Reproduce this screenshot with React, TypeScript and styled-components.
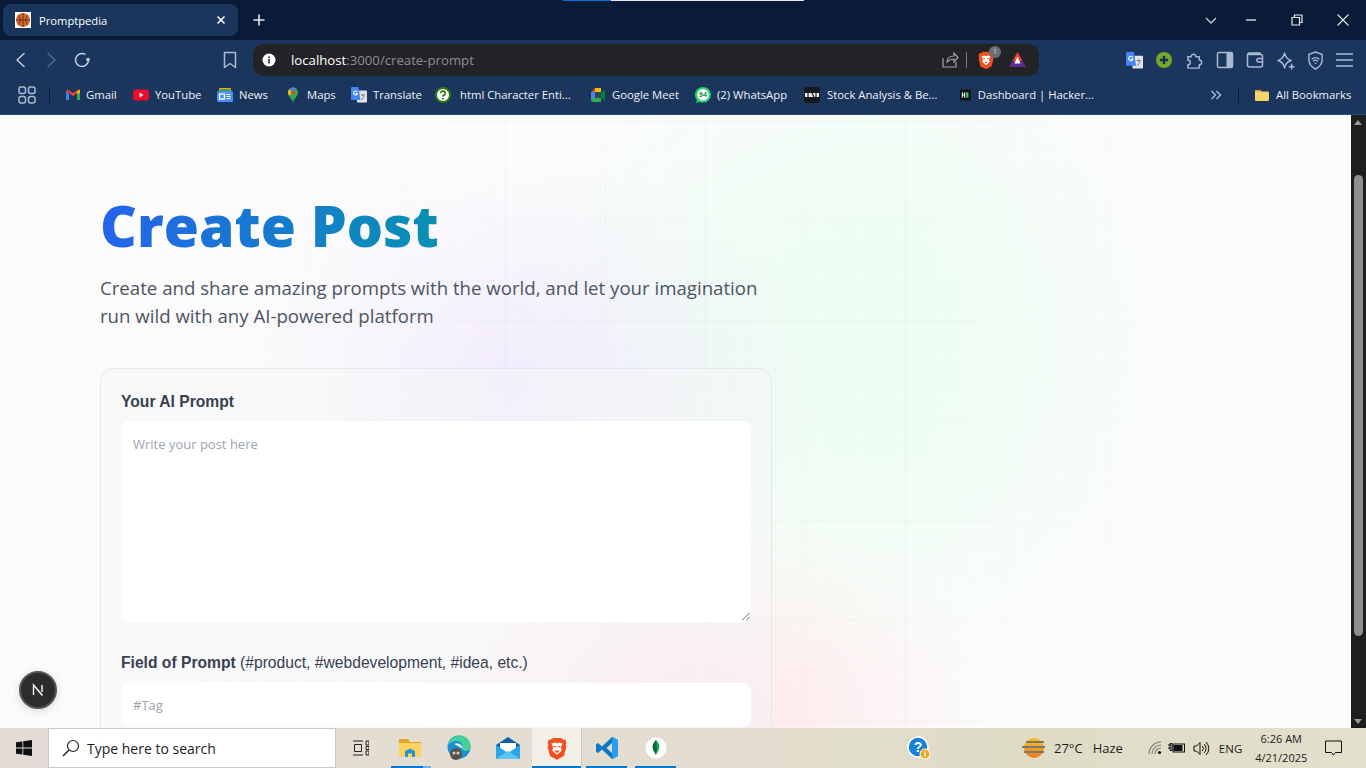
import React from "react";
import styled, { createGlobalStyle } from "styled-components";

const Global = createGlobalStyle`
  html, body { margin: 0; padding: 0; height: 100%; overflow: hidden; background: #fff; }
  #root { height: 100vh; }
  * { box-sizing: border-box; }
`;

const Shell = styled.div`
  position: relative; height: 768px; width: 1366px; display: flex; flex-direction: column; overflow: hidden;
  font-family: "Open Sans", "Noto Sans", sans-serif;
`;
const Progress = styled.div`
  position: absolute; top: 0; left: 563px; width: 241px; height: 1px; z-index: 5;
  background: linear-gradient(90deg, #0a6fd8 0 48px, #e8e8e8 48px);
`;
const TabStrip = styled.div`
  height: 40px; flex: none; background: #0a1b38; display: flex; align-items: center; padding: 0 0 0 3px; color: #fff;
`;
const Tab = styled.div`
  width: 235px; height: 32px; background: #1b365d; border-radius: 8px; display: flex; align-items: center; padding: 0 12px;
`;
const TabTitle = styled.span`
  font-size: 11.2px; color: #fff; margin-left: 8px; flex: 1;
`;
const StripSpacer = styled.div`flex: 1;`;
const WinBtn = styled.div<{ $pad?: number }>`
  width: 46px; height: 40px; display: flex; align-items: center; justify-content: center; padding-left: ${p => p.$pad ?? 0}px;
`;
const NewTab = styled.div`
  margin-left: 11px; width: 20px; height: 20px; display: flex; align-items: center; justify-content: center;
`;
const Toolbar = styled.div`
  height: 40px; flex: none; background: #1b365d; display: flex; align-items: center; padding-left: 14px;
`;
const NavBtn = styled.div<{ $w: number }>`
  width: ${p => p.$w}px; height: 24px; display: flex; align-items: center; flex: none;
`;
const Address = styled.div`
  width: 786px; height: 32px; background: #222326; border-radius: 10px; display: flex; align-items: center; padding: 0 12px 0 9px; margin-left: 14px; flex: none;
`;
const Host = styled.span`font-size: 13.2px; color: #fff; margin-left: 15px;`;
const Path = styled.span`font-size: 13.2px; color: #8d8e92;`;
const AddrEnd = styled.div`margin-left: auto; display: flex; align-items: center;`;
const AddrSep = styled.div`width: 1px; height: 16px; background: #7d7e82; margin: 0 11px 0 7px;`;
const ShieldWrap = styled.div`position: relative; display: flex;`;
const ShieldBadge = styled.span`
  position: absolute; top: -5px; right: -7px; width: 12px; height: 12px; border-radius: 50%; background: #6d6f78; color: #ddd;
  font-size: 7px; line-height: 12px; text-align: center;
`;
const ExtRow = styled.div`
  display: flex; align-items: center; margin-left: 87px; gap: 12px;
`;
const Bookmarks = styled.div`
  height: 35px; flex: none; background: #1b365d; display: flex; align-items: center; padding: 0 0 5px 18px; border-bottom: 1px solid #2f4a70;
`;
const VSep = styled.div<{ $l: number; $r: number }>`
  width: 1px; height: 16px; background: #0a1b38; margin-left: ${p => p.$l}px; margin-right: ${p => p.$r}px; flex: none;
`;
const Mark = styled.div<{ $w: number; $gap?: number }>`
  width: ${p => p.$w}px; flex: none; display: flex; align-items: center; gap: ${p => p.$gap ?? 6}px; white-space: nowrap; overflow: hidden;
  font-size: 11.3px; color: #eef1f5;
`;
const Content = styled.div`
  flex: 1; min-height: 0; display: flex; position: relative;
`;
const Page = styled.main`
  flex: 1; min-width: 0; overflow: hidden; padding: 80px 0 0 100px;
  background-color: #fcfcfc;
  background-image:
    linear-gradient(90deg, #fbfbfb 8%, transparent 38%, transparent 68%, #fbfbfb 96%),
    linear-gradient(rgba(0,0,0,.016) 1px, transparent 1px),
    linear-gradient(90deg, rgba(0,0,0,.016) 1px, transparent 1px),
    linear-gradient(rgba(0,0,0,.009) 1px, transparent 1px),
    linear-gradient(90deg, rgba(0,0,0,.009) 1px, transparent 1px),
    radial-gradient(ellipse 330px 230px at 500px 270px, rgba(236,226,255,.62), transparent 100%),
    radial-gradient(ellipse 400px 340px at 880px 225px, rgba(236,254,242,1) 0, rgba(236,254,242,.8) 35%, transparent 100%),
    radial-gradient(ellipse 300px 240px at 700px 610px, rgba(255,230,232,.95), transparent 100%);
  background-size: auto, 100px 100px, 100px 100px, 10px 10px, 10px 10px, auto, auto, auto;
  background-position: 0 0, 5px 5px, 5px 5px, 5px 5px, 5px 5px, 0 0, 0 0, 0 0;
`;
const Title = styled.h1`
  margin: 0; font-family: "Open Sans", sans-serif; font-weight: 800; font-size: 57px; line-height: 60px;
  width: max-content; background: linear-gradient(90deg, #2563eb, #0891b2); -webkit-background-clip: text; background-clip: text; color: transparent;
`;
const Lead = styled.p`
  margin: 19px 0 0; width: 672px; font-size: 18.65px; line-height: 28px; color: #4b5563; font-family: "Open Sans", sans-serif;
`;
const Card = styled.form`
  margin-top: 38px; width: 672px; padding: 20px; border: 1px solid #e5e7eb; border-radius: 14px;
  background: rgba(247,247,247,.45); display: flex; flex-direction: column;
`;
const Label = styled.label`
  display: block; height: 24px; padding-top: 1px;
  font-family: "Liberation Sans", Arial, sans-serif; font-size: 15.65px; line-height: 24px; font-weight: 700; color: #374151;
`;
const LabelNote = styled.span`font-weight: 400;`;
const TextBox = styled.div`
  margin-top: 8px; height: 201px; background: #fff; border-radius: 8px; padding: 13px 12px; position: relative;
  font-size: 13px; color: #9ca3af; line-height: 20px; font-family: "Open Sans", sans-serif; margin-bottom: 28px;
`;
const Grip = styled.svg`position: absolute; right: 1px; bottom: 1px;`;
const InputBox = styled.div`
  margin-top: 9px; height: 44px; background: #fff; border-radius: 8px; padding: 12px; font-size: 13px; line-height: 20px; color: #9ca3af; font-family: "Open Sans", sans-serif;
`;
const ScrollTrack = styled.div`
  width: 15px; flex: none; background: #1e1e1e; position: relative;
`;
const Thumb = styled.div`
  position: absolute; top: 60px; left: 3px; width: 9px; height: 461px; background: #8f8f8f; border-radius: 5px;
`;
const ArrowUp = styled.div`
  position: absolute; top: 5px; left: 3px; width: 0; height: 0; border: 4.5px solid transparent; border-bottom: 5px solid #9a9a9a; border-top: 0;
`;
const ArrowDown = styled.div`
  position: absolute; bottom: 4px; left: 3px; width: 0; height: 0; border: 4.5px solid transparent; border-top: 5px solid #9a9a9a; border-bottom: 0;
`;
const NextBadge = styled.div`
  position: absolute; left: 19px; top: 556px; width: 38px; height: 38px; border-radius: 50%; background: #2c2c2c; border: 2px solid #555;
  display: flex; align-items: center; justify-content: center; box-shadow: 0 2px 8px rgba(0,0,0,.15);
`;
const Taskbar = styled.footer`
  height: 40px; flex: none; display: flex; align-items: center;
  background: linear-gradient(90deg, #e4dcd4 0%, #e3ddd0 50%, #dfdcc6 75%, #e2dfcc 100%);
`;
const StartBtn = styled.div`width: 48px; height: 40px; display: flex; align-items: center; justify-content: center; flex: none;`;
const SearchBox = styled.div`
  width: 288px; height: 40px; background: #fff; border: 1px solid #c8c8c8; display: flex; align-items: center; padding-left: 13px; flex: none;
  font-size: 14px; color: #1c1c1c; gap: 7px;
`;
const TaskIcon = styled.div<{ $active?: boolean; $inset?: number; $split?: boolean }>`
  width: 49px; height: 40px; flex: none; display: flex; align-items: center; justify-content: center; position: relative;
  background: ${p => (p.$active ? "#f3efe9" : "transparent")};
  &::after {
    content: ""; display: ${p => (p.$inset === undefined ? "none" : "block")}; position: absolute;
    left: ${p => p.$inset ?? 0}px; right: ${p => (p.$split ? 3 : p.$inset ?? 0)}px; bottom: 0; height: 2px;
    background: ${p => (p.$split ? "linear-gradient(90deg, #0078d4 80%, #6cb2e8 80%)" : "#0078d4")};
  }
`;
const TaskSep = styled.div`width: 1px; height: 38px; background: #c9c5bd; flex: none;`;
const Tray = styled.div`
  flex: 1; display: flex; align-items: center; font-size: 13px; color: #1c1c1c;
`;
const TrayItem = styled.div<{ $l: number }>`
  margin-left: ${p => p.$l}px; display: flex; align-items: center; flex: none; white-space: nowrap;
`;
const LangText = styled.span`font-size: 11.5px;`;
const Clock = styled.div`
  margin-left: 6px; width: 66px; text-align: center; font-size: 11px; line-height: 19px; color: #1c1c1c; flex: none;
`;

const ink = "#a9bad2";
const stroke = { fill: "none", stroke: ink, strokeWidth: 1.5, strokeLinecap: "round" as const, strokeLinejoin: "round" as const };

const Ball = () => (
  <svg width="16" height="16" viewBox="0 0 16 16"><rect width="16" height="16" fill="#fff" /><circle cx="8" cy="8" r="7" fill="#d9672a" /><path d="M1 8h14M8 1v14M3 3c3 3 3 7 0 10M13 3c-3 3-3 7 0 10" fill="none" stroke="#5a2c12" strokeWidth=".9" /></svg>
);
const Gmail = () => (
  <svg width="16" height="16" viewBox="0 0 16 16"><path d="M1 4v9h3V7z" fill="#4285f4" /><path d="M15 4v9h-3V7z" fill="#34a853" /><path d="M1 4l7 5 7-5-1.500-1.500L8 6 2.500 2.500z" fill="#ea4335" /><path d="M12 4.500l3-2v3l-3 2z" fill="#fbbc04" /></svg>
);
const YouTube = () => (
  <svg width="16" height="16" viewBox="0 0 16 16"><rect y="2.500" width="16" height="11" rx="3" fill="#f5072e" /><path d="M6.500 5.500l4 2.500-4 2.500z" fill="#fff" /></svg>
);
const News = () => (
  <svg width="16" height="16" viewBox="0 0 16 16"><rect x="2" y="1" width="12" height="6" rx="1" fill="#f9ab00" /><rect x="3" y="2" width="10" height="5" fill="#34a853" /><rect y="4" width="16" height="11" rx="1.500" fill="#4a90f2" /><rect x="2.500" y="7" width="5" height="5" fill="none" stroke="#fff" strokeWidth="1.300" /><path d="M9.500 7.500h4M9.500 9.500h4M9.500 11.500h4" stroke="#fff" strokeWidth="1.200" /></svg>
);
const Maps = () => (
  <svg width="16" height="16" viewBox="0 0 16 16"><path d="M8 0.500C5 .5 3 2.800 3 5.500c0 3.500 3.500 5.500 5 10 1.500-4.500 5-6.500 5-10C13 2.800 11 .5 8 .5z" fill="#34a853" /><path d="M4 2.500A5 5 0 0 1 8 .5a5 5 0 0 1 3 1L8 5.500z" fill="#4285f4" /><path d="M3 5.500c0 1.300.4 2.200 1 3l4-3-4-3c-.6.8-1 1.800-1 3z" fill="#fbbc04" /><circle cx="8" cy="5.500" r="2" fill="#ea4335" /></svg>
);
const Translate = ({ s = 16 }: { s?: number }) => (
  <svg width={s} height={s} viewBox="0 0 16 16"><rect x="6" y="3.500" width="10" height="12" rx=".8" fill="#dfe3e8" /><path d="M1 0h6.500l2 13H1a1 1 0 0 1-1-1V1a1 1 0 0 1 1-1z" fill="#4285f4" /><path d="M6.300 5A2 2 0 1 0 6.500 6.600H4.500" fill="none" stroke="#fff" strokeWidth="1.100" /><path d="M10 8h4M12 7v2M10.500 13l3-4" stroke="#777" strokeWidth=".9" fill="none" /></svg>
);
const Help = () => (
  <svg width="16" height="16" viewBox="0 0 16 16"><circle cx="8" cy="8" r="7" fill="#fff" stroke="#2d7a12" strokeWidth="2" /><path d="M5.800 6.200A2.200 2.200 0 1 1 8 8.500v1.300" fill="none" stroke="#2d7a12" strokeWidth="1.600" /><circle cx="8" cy="11.700" r="1" fill="#2d7a12" /></svg>
);
const Meet = () => (
  <svg width="16" height="16" viewBox="0 0 16 16"><path d="M1 5l4-4h6v4H5v6H1z" fill="#ea4335" /><path d="M5 1h6v4H5z" fill="#fbbc04" /><path d="M1 5h4v6H1z" fill="#4285f4" /><path d="M1 11h10v4H3a2 2 0 0 1-2-2z" fill="#34a853" /><path d="M11 5l4-2v10l-4-2z" fill="#00832d" /><path d="M5 5h6v6H5z" fill="#2a4a5a" /></svg>
);
const WhatsApp = () => (
  <svg width="16" height="16" viewBox="0 0 16 16"><path d="M8 0a8 7.800 0 0 1 0 15.600c-1.400 0-2.700-.3-3.800-.9L1 16l.9-3.200A8 7.800 0 0 1 8 0z" fill="#25d366" /><circle cx="8" cy="7.800" r="5.800" fill="#fff" /><text x="8" y="10.300" textAnchor="middle" fontSize="7" fontWeight="700" fill="#128c3e" fontFamily="Liberation Sans">94</text></svg>
);
const Stock = () => (
  <svg width="16" height="16" viewBox="0 0 16 16"><rect width="16" height="16" rx="3" fill="#14181f" /><path d="M1 6h14v4H1z" fill="#f2f2f2" /><path d="M4 6v4M8 6l2 4M12 6v4" stroke="#14181f" strokeWidth="1.200" /></svg>
);
const Hacker = () => (
  <svg width="16" height="16" viewBox="0 0 16 16"><rect width="16" height="16" fill="#0d1117" /><path d="M3.500 4v8M7 4v8M3.500 8H7" stroke="#fff" strokeWidth="1.500" /><rect x="9" y="4" width="3.500" height="8" fill="#2ec866" /></svg>
);
const Folder = () => (
  <svg width="16" height="16" viewBox="0 0 16 16"><path d="M1 4a1 1 0 0 1 1-1h4l1.500 1.500H14a1 1 0 0 1 1 1V13a1 1 0 0 1-1 1H2a1 1 0 0 1-1-1z" fill="#f5d36b" /><path d="M1 4a1 1 0 0 1 1-1h4l1.500 1.500H1z" fill="#d9a52e" /></svg>
);
const BraveShield = ({ s = 16 }: { s?: number }) => (
  <svg width={s} height={s * 1.150} viewBox="0 0 16 18">
    <path d="M3 1.800L5 .5h6l2 1.300 1.800.2.700 2.300-.6 1.700.6 1.500-2 7.500L8 18l-5.500-2.800-2-7.500.6-1.500-.6-1.700.7-2.300z" fill="#f1501f" />
    <path d="M3.500 5l3-.8L8 5l1.500-.8 3 .8-1.500 3 .8 2.500L8 14l-3.800-3.500L5 8z" fill="#fff" />
    <path d="M5.300 7.300l1.700.4M10.700 7.300L9 7.700M7 11h2l-1 1z" stroke="#f1501f" strokeWidth="1" fill="none" />
  </svg>
);
const WinLogo = () => (
  <svg width="16" height="16" viewBox="0 0 16 16"><path d="M0 2.300l6.500-.9v6.200H0zM7.300 1.300L16 0v7.600H7.300zM0 8.400h6.500v6.200L0 13.700zM7.300 8.400H16V16l-8.700-1.200z" fill="#111" /></svg>
);
const NextN = () => (
  <svg width="14" height="14" viewBox="0 0 14 14"><path d="M2.500 12V2l9 10.500M11 2v7" fill="none" stroke="#fff" strokeWidth="1.400" /></svg>
);

const bookmarks: [React.ReactNode, string, number, number?][] = [
  [<Gmail />, "Gmail", 68, 5],
  [<YouTube />, "YouTube", 84],
  [<News />, "News", 68],
  [<Maps />, "Maps", 66],
  [<Translate />, "Translate", 84],
  [<Help />, "html Character Enti...", 155, 9],
  [<Meet />, "Google Meet", 105],
  [<WhatsApp />, "(2) WhatsApp", 109],
  [<Stock />, "Stock Analysis & Be...", 156, 7],
  [<Hacker />, "Dashboard | Hacker...", 134, 7],
];

export default function App() {
  return (
    <Shell>
      <Global />
      <Progress />
      <TabStrip>
        <Tab>
          <Ball />
          <TabTitle>Promptpedia</TabTitle>
          <svg width="10" height="10" viewBox="0 0 10 10"><path d="M1.500 1.500l7 7M8.500 1.500l-7 7" stroke="#fff" strokeWidth="1.500" /></svg>
        </Tab>
        <NewTab>
          <svg width="12" height="12" viewBox="0 0 12 12"><path d="M6 .5v11M.5 6h11" stroke="#e6e9ee" strokeWidth="1.600" /></svg>
        </NewTab>
        <StripSpacer />
        <WinBtn $pad={12}>
          <svg width="12" height="7" viewBox="0 0 12 7"><path d="M1 1l5 5 5-5" fill="none" stroke="#c8d0dc" strokeWidth="1.300" /></svg>
        </WinBtn>
        <WinBtn>
          <svg width="10" height="2" viewBox="0 0 10 2"><path d="M0 1h10" stroke="#e6e9ee" strokeWidth="1.300" /></svg>
        </WinBtn>
        <WinBtn>
          <svg width="12" height="12" viewBox="0 0 12 12"><path d="M1 3.500h7.500V11H1zM3.500 3.500V1H11v7.500H8.500" fill="none" stroke="#e6e9ee" strokeWidth="1.200" /></svg>
        </WinBtn>
        <WinBtn>
          <svg width="12" height="12" viewBox="0 0 12 12"><path d="M.5.500l11 11M11.500.500l-11 11" stroke="#e6e9ee" strokeWidth="1.100" /></svg>
        </WinBtn>
      </TabStrip>
      <Toolbar>
        <NavBtn $w={30}>
          <svg width="14" height="16" viewBox="0 0 14 16"><path d="M10 1.500L3 8l7 6.500" {...stroke} stroke="#c2cfe0" /></svg>
        </NavBtn>
        <NavBtn $w={29}>
          <svg width="14" height="16" viewBox="0 0 14 16"><path d="M4 1.500L11 8l-7 6.500" {...stroke} stroke="#56688a" /></svg>
        </NavBtn>
        <NavBtn $w={150}>
          <svg width="18" height="18" viewBox="0 0 18 18"><path d="M15.500 9A6.500 6.500 0 1 1 12 3.200" {...stroke} stroke="#c2cfe0" /><circle cx="15" cy="8.500" r="1.800" fill="#c2cfe0" /></svg>
        </NavBtn>
        <NavBtn $w={16}>
          <svg width="14" height="18" viewBox="0 0 14 18"><path d="M1.500 1.500h11v15L7 12.500l-5.500 4z" {...stroke} /></svg>
        </NavBtn>
        <Address>
          <svg width="14" height="14" viewBox="0 0 14 14"><circle cx="7" cy="7" r="6.500" fill="#fff" /><rect x="6.200" y="6" width="1.600" height="4.500" fill="#222326" /><rect x="6.200" y="3.500" width="1.600" height="1.600" fill="#222326" /></svg>
          <Host>localhost</Host>
          <Path>:3000/create-prompt</Path>
          <AddrEnd>
            <svg width="17" height="16" viewBox="0 0 17 16"><path d="M1 6v9h13V10M5 10c0-4 3-6 7-6V1l4 4.500L12 10V7c-3 0-5 1-7 3z" fill="none" stroke="#a3a5a9" strokeWidth="1.200" /></svg>
            <AddrSep />
            <ShieldWrap>
              <BraveShield />
              <ShieldBadge>1</ShieldBadge>
            </ShieldWrap>
            <svg width="19" height="17" viewBox="0 0 19 17" style={{ marginLeft: 14 }}><path d="M9.500 1l8.500 15H1z" fill="#5c2d91" /><path d="M9.500 1l5 9h-10z" fill="#e8432e" /><path d="M9.500 5.500l3 7h-6z" fill="#fff" /></svg>
          </AddrEnd>
        </Address>
        <ExtRow>
          <Translate s={17} />
          <svg width="18" height="18" viewBox="0 0 18 18"><circle cx="9" cy="9" r="8" fill="#76a52a" /><path d="M9 5v8M5 9h8" stroke="#12304f" strokeWidth="2.400" /></svg>
          <svg width="19" height="19" viewBox="0 0 20 20"><path d="M3 6h3.500a2.500 2.500 0 1 1 5 0H15v3.500a2.500 2.500 0 1 1 0 5V18H3v-3.500a2.500 2.500 0 1 0 0-5z" {...stroke} /></svg>
          <svg width="18" height="18" viewBox="0 0 18 18"><rect x="1.500" y="1.500" width="15" height="15" rx="1.500" {...stroke} /><rect x="10.500" y="2" width="5.500" height="14" fill={ink} /></svg>
          <svg width="18" height="18" viewBox="0 0 18 18"><path d="M14 3.500V2H3.500a2 2 0 0 0-2 2v10a2 2 0 0 0 2 2h11a2 2 0 0 0 2-2V5a1.500 1.500 0 0 0-1.500-1.500H3M16.500 7.500h-4a1.700 1.700 0 0 0 0 3.500h4" {...stroke} /></svg>
          <svg width="19" height="19" viewBox="0 0 20 20"><path d="M9 2c1 5 3 7 7 8-4 1-6 3-7 8-1-5-3-7-7-8 4-1 6-3 7-8zM16.500 14v5M14 16.500h5" {...stroke} /></svg>
          <svg width="17" height="19" viewBox="0 0 18 20"><path d="M9 1l7 2.500V9c0 5-3 8-7 10-4-2-7-5-7-10V3.500zM5.500 8.500a5 5 0 0 1 7 0M7 10.500a3 3 0 0 1 4 0" {...stroke} /><circle cx="9" cy="13" r="1" fill={ink} /></svg>
          <svg width="17" height="16" viewBox="0 0 17 16"><path d="M0 2h17M0 8h17M0 14h17" stroke={ink} strokeWidth="1.700" /></svg>
        </ExtRow>
      </Toolbar>
      <Bookmarks>
        <svg width="18" height="18" viewBox="0 0 18 18"><rect x="1" y="1" width="6.500" height="6.500" rx="2" {...stroke} /><rect x="10.500" y="1" width="6.500" height="6.500" rx="2" {...stroke} /><rect x="1" y="10.500" width="6.500" height="6.500" rx="2" {...stroke} /><rect x="10.500" y="10.500" width="6.500" height="6.500" rx="2" {...stroke} /></svg>
        <VSep $l={13} $r={15} />
        {bookmarks.map(([icon, label, w, gap]) => (
          <Mark key={label} $w={w} $gap={gap}>{icon}<span>{label}</span></Mark>
        ))}
        <svg width="12" height="10" viewBox="0 0 12 10" style={{ marginLeft: 116 }}><path d="M1.500 1l4 4-4 4M6.500 1l4 4-4 4" fill="none" stroke="#b8c4d6" strokeWidth="1.300" /></svg>
        <VSep $l={16} $r={15} />
        <Mark $w={100}><Folder /><span>All Bookmarks</span></Mark>
      </Bookmarks>
      <Content>
        <Page>
          <Title>Create Post</Title>
          <Lead>Create and share amazing prompts with the world, and let your imagination run wild with any AI-powered platform</Lead>
          <Card>
            <Label>Your AI Prompt</Label>
            <TextBox>
              Write your post here
              <Grip width="9" height="9" viewBox="0 0 9 9"><path d="M8.500 1L1 8.500M8.500 5L5 8.500" stroke="#666" strokeWidth="1" /></Grip>
            </TextBox>
            <Label>Field of Prompt <LabelNote>(#product, #webdevelopment, #idea, etc.)</LabelNote></Label>
            <InputBox>#Tag</InputBox>
          </Card>
        </Page>
        <ScrollTrack>
          <ArrowUp />
          <Thumb />
          <ArrowDown />
        </ScrollTrack>
        <NextBadge><NextN /></NextBadge>
      </Content>
      <Taskbar>
        <StartBtn><WinLogo /></StartBtn>
        <SearchBox>
          <svg width="18" height="18" viewBox="0 0 18 18"><circle cx="11" cy="7" r="5.500" fill="none" stroke="#222" strokeWidth="1.200" /><path d="M7 11l-6 6" stroke="#222" strokeWidth="1.400" /></svg>
          Type here to search
        </SearchBox>
        <TaskIcon>
          <svg width="16" height="16" viewBox="0 0 16 16"><path d="M0 1h10M0 15h10M1.500 4.500h7v7h-7zM13 1h3v4h-3zM13 6.500h3v3h-3zM13 11h3v4h-3z" fill="none" stroke="#222" strokeWidth="1" /></svg>
        </TaskIcon>
        <TaskIcon $inset={6} $split>
          <svg width="22" height="20" viewBox="0 0 22 20"><path d="M0 1h9l2 3h11v3H0z" fill="#e0a526" /><rect y="5" width="22" height="14" fill="#fbd55b" /><path d="M6 13l5-2.500 5 2.500v6h-3v-3.500H9V19H6z" fill="#2b8fd8" /></svg>
        </TaskIcon>
        <TaskIcon>
          <svg width="24" height="26" viewBox="0 0 24 26"><circle cx="12" cy="12" r="11.500" fill="#1b8fd0" /><path d="M1 10C3 3 9 .5 13 .5c6 0 10.500 5 10.500 11 0 3-2.500 4.500-5 4.500-3 0-3-2-3-4 0-3-2-6-6-6C6 6 3 8 1 10z" fill="#43d29a" /><path d="M7 9c4-2 8 0 9 5-2-2-6-3-9-5z" fill="#e8f3ee" /><circle cx="9" cy="19" r="6" fill="#5c5148" /><circle cx="7" cy="18" r="1.500" fill="#d9d2c3" /><circle cx="11" cy="18" r="1.500" fill="#d9d2c3" /></svg>
        </TaskIcon>
        <TaskIcon>
          <svg width="24" height="24" viewBox="0 0 24 24"><path d="M12 1l12 8v14H0V9z" fill="#0f5ea8" /><path d="M4 7h16v8l-8 4-8-4z" fill="#fff" /><path d="M0 9l12 8 12-8v14H0z" fill="#2ca6e8" /><path d="M0 23l12-8 12 8z" fill="#60c4f2" /></svg>
        </TaskIcon>
        <TaskIcon $active $inset={0}><BraveShield s={20} /></TaskIcon>
        <TaskSep />
        <TaskIcon $inset={4}>
          <svg width="24" height="24" viewBox="0 0 24 24"><path d="M17 1l6 3v16l-6 3L7 13.500 3 17l-2-1.200V8.200L3 7l4 3.500zM17 7l-5.500 5L17 17z" fill="#0e78c8" fillRule="evenodd" /><path d="M17 1l6 3v16l-6 3z" fill="#2a9df0" /></svg>
        </TaskIcon>
        <TaskIcon $inset={4}>
          <svg width="22" height="22" viewBox="0 0 22 22"><circle cx="11" cy="11" r="10.500" fill="#fff" /><path d="M11 3c3 3 4 6 3 9-.5 2-2 3.500-3 6-1-2.500-2.500-4-3-6-1-3 0-6 3-9z" fill="#13aa52" /><path d="M11 3c1 5 1 10 0 15-1-2.500-2.500-4-3-6-1-3 0-6 3-9z" fill="#0b6b39" /></svg>
        </TaskIcon>
        <Tray>
          <TrayItem $l={227}>
            <svg width="24" height="24" viewBox="0 0 24 24"><circle cx="11" cy="11" r="10" fill="#1582dc" stroke="#fff" strokeWidth="1.500" /><text x="11" y="16" textAnchor="middle" fontSize="14" fontWeight="700" fill="#fff" fontFamily="Liberation Sans">?</text><circle cx="18" cy="18" r="5" fill="#f0a81e" stroke="#fff" /><rect x="17.300" y="15.500" width="1.400" height="5" fill="#fff" /></svg>
          </TrayItem>
          <TrayItem $l={90}>
            <svg width="26" height="22" viewBox="0 0 26 22"><defs><linearGradient id="sun" x1="0" y1="0" x2="0" y2="1"><stop offset="0" stopColor="#fbc21a" /><stop offset="1" stopColor="#f27a1a" /></linearGradient></defs><circle cx="13" cy="11" r="10" fill="url(#sun)" /><path d="M5 5h18M1 10h23M3 15h20" stroke="#777" strokeWidth="1.800" /></svg>
          </TrayItem>
          <TrayItem $l={7}>27°C</TrayItem>
          <TrayItem $l={10}>Haze</TrayItem>
          <TrayItem $l={25}>
            <svg width="15" height="14" viewBox="0 0 15 14"><path d="M1 13a12 12 0 0 1 12-12M4 13a9 9 0 0 1 9-9M7 13a6 6 0 0 1 6-6" fill="none" stroke="#777" strokeWidth="1.100" /><circle cx="11.500" cy="11.500" r="1.600" fill="#111" /></svg>
          </TrayItem>
          <TrayItem $l={5}>
            <svg width="17" height="12" viewBox="0 0 17 12"><path d="M0 3h3M0 6h3M2 1.500h2v7H2z" fill="none" stroke="#111" /><rect x="5" y="2" width="11.500" height="8" fill="none" stroke="#111" /><rect x="5.500" y="3" width="9" height="6" fill="#111" /></svg>
          </TrayItem>
          <TrayItem $l={8}>
            <svg width="17" height="15" viewBox="0 0 17 15"><path d="M1 5h2.500L7 1.500v12L3.500 10H1zM9 5a3 3 0 0 1 0 5M11 3a6 6 0 0 1 0 9M13 1a9 9 0 0 1 0 13" fill="none" stroke="#111" strokeWidth="1" /></svg>
          </TrayItem>
          <TrayItem $l={9}><LangText>ENG</LangText></TrayItem>
          <Clock>6:26 AM<br />4/21/2025</Clock>
          <TrayItem $l={11}>
            <svg width="17" height="16" viewBox="0 0 17 16"><path d="M.5 1h16v11.500h-6l-2 2.500-2-2.500h-6z" fill="none" stroke="#111" /></svg>
          </TrayItem>
        </Tray>
      </Taskbar>
    </Shell>
  );
}
